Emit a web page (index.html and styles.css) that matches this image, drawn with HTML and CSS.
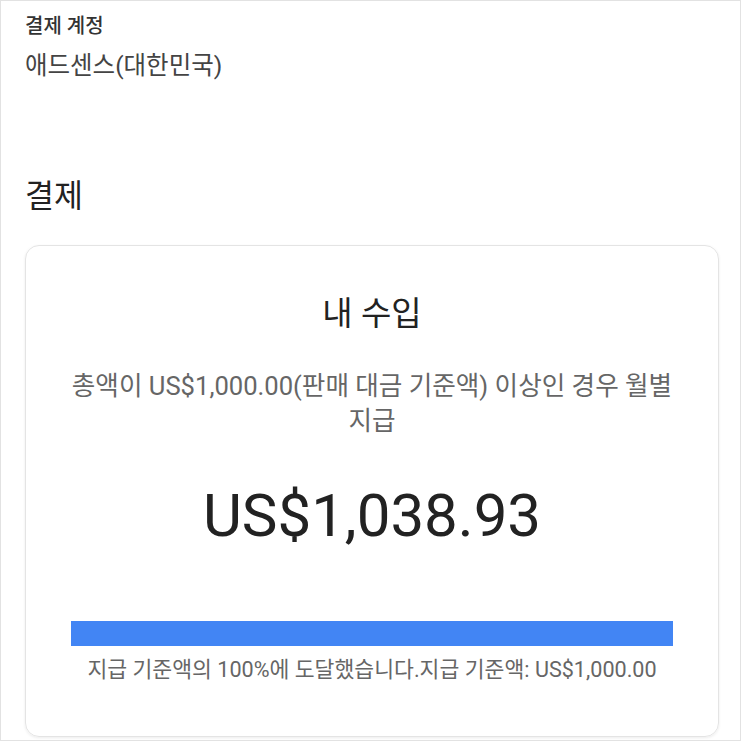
FILE: index.html
```html
<!DOCTYPE html>
<html lang="ko">
<head>
<meta charset="utf-8">
<title>결제</title>
<link rel="stylesheet" href="styles.css">
</head>
<body>
<div class="frame">
  <div class="account">
    <div class="label">결제 계정</div>
    <div class="value">애드센스(대한민국)</div>
  </div>
  <h2 class="heading">결제</h2>
  <section class="card">
    <h3 class="card-title">내 수입</h3>
    <p class="desc">총액이 US$1,000.00(판매 대금 기준액) 이상인 경우 월별 지급</p>
    <div class="amount">US$1,038.93</div>
    <div class="bar"><div class="bar-fill" style="width:100%"></div></div>
    <p class="note">지급 기준액의 100%에 도달했습니다.지급 기준액: US$1,000.00</p>
  </section>
</div>
</body>
</html>
```

FILE: styles.css
```css
* { box-sizing: border-box; }
html, body { margin: 0; padding: 0; background: #fff; }
body {
  font-family: Roboto, "Noto Sans CJK KR", sans-serif;
  color: #222;
  word-break: keep-all;
}
.frame {
  width: 741px;
  height: 741px;
  border: 1px solid #e2e2e2;
  padding: 12px 24px 0 24px;
  overflow: hidden;
}
.account { display: flex; flex-direction: column; }
.label {
  font-size: 20px;
  line-height: 26px;
  font-weight: 500;
  color: #333;
}
.value {
  margin-top: 11px;
  font-size: 24.5px;
  line-height: 32px;
  color: #444;
}
.heading {
  margin: 95px 0 0 0;
  font-size: 31.5px;
  line-height: 40px;
  font-weight: 400;
  color: #222;
}
.card {
  margin-top: 28px;
  width: 694px;
  border: 1px solid #e4e4e4;
  border-radius: 14px;
  box-shadow: 0 1px 3px rgba(0,0,0,0.08);
  padding: 48px 40px 52px 40px;
  display: flex;
  flex-direction: column;
  align-items: center;
  text-align: center;
}
.card-title {
  margin: 0;
  font-size: 33px;
  line-height: 40px;
  font-weight: 400;
  color: #222;
}
.desc {
  margin: 35px 0 0 0;
  font-size: 25.6px;
  line-height: 35px;
  color: #666;
  width: 100%;
}
.amount {
  margin-top: 42px;
  font-size: 60px;
  line-height: 70px;
  color: #222;
}
.bar {
  margin-top: 70px;
  width: 602px;
  height: 25px;
  background: #e8eefc;
}
.bar-fill {
  height: 100%;
  background: #4285f4;
}
.note {
  margin: 10px 0 0 0;
  font-size: 21.6px;
  line-height: 28px;
  color: #666;
  white-space: nowrap;
}
```
